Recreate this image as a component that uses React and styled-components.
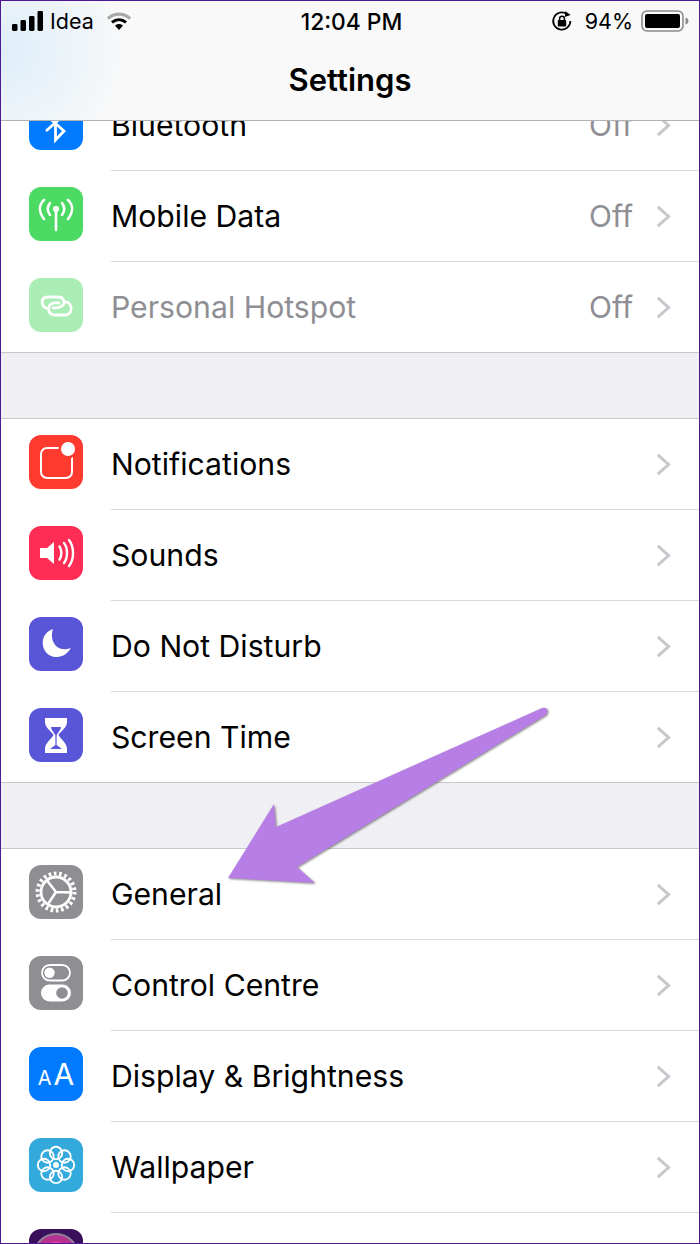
import styled, { createGlobalStyle } from 'styled-components';

const GlobalStyle = createGlobalStyle`
  html, body {
    margin: 0;
    padding: 0;
    background: #fff;
  }
  body {
    font-family: Inter, "Liberation Sans", sans-serif;
    -webkit-font-smoothing: antialiased;
  }
`;

const Frame = styled.div`
  position: relative;
  width: 700px;
  height: 1244px;
  box-sizing: border-box;
  border: 1px solid #4c1a92;
  overflow: hidden;
  display: flex;
  flex-direction: column;
  background: #efeff4;
`;

const NavBar = styled.header`
  position: relative;
  z-index: 1;
  flex: none;
  height: 120px;
  box-sizing: border-box;
  border-bottom: 1px solid #b2b2b2;
  background:
    radial-gradient(ellipse 130px 120px at 0 50px, #deeef9 0%, rgba(222, 238, 249, 0) 100%),
    #f9f9f9;
  display: flex;
  flex-direction: column;
`;

const StatusBar = styled.div`
  display: grid;
  grid-template-columns: 1fr auto 1fr;
  align-items: center;
  height: 40px;
  padding: 0 10px 0 11px;
  color: #000;
`;

const StatusSide = styled.div`
  display: flex;
  align-items: center;
  justify-content: ${(p) => (p.$end ? 'flex-end' : 'flex-start')};
`;

const Carrier = styled.span`
  font-size: 21.5px;
  margin: 0 12px 0 6px;
`;

const Clock = styled.span`
  font-size: 22.8px;
  font-weight: 500;
  margin-left: 2px;
`;

const Percent = styled.span`
  font-size: 21.5px;
  margin: 0 8px 0 12px;
`;

const Title = styled.h1`
  margin: 21px 0 0;
  text-align: center;
  font-size: 31px;
  font-weight: 600;
  line-height: 36px;
  color: #000;
`;

const List = styled.main`
  flex: 1;
  min-height: 0;
  overflow: hidden;
`;

const Group = styled.section`
  background: #fff;
  margin-bottom: 65px;
  border-top: ${(p) => (p.$flush ? 'none' : '1px solid #c8c7cc')};
  margin-top: ${(p) => (p.$flush ? '-41px' : '0')};
`;

const Row = styled.div`
  display: flex;
  align-items: flex-start;
  gap: 28px;
  height: 91px;
  box-sizing: border-box;
  padding-left: 28px;
  &:last-child {
    border-bottom: 1px solid #c8c7cc;
  }
`;

const Tile = styled.div`
  flex: none;
  width: 54px;
  height: 54px;
  margin-top: 16px;
  border-radius: 12px;
  background: ${(p) => p.$bg};
  opacity: ${(p) => (p.$dim ? 0.47 : 1)};
  display: flex;
  align-items: center;
  justify-content: center;
  overflow: hidden;
  color: #fff;
`;

const Body = styled.div`
  flex: 1;
  height: 100%;
  box-sizing: border-box;
  display: flex;
  align-items: center;
  padding-right: 28px;
  border-bottom: 1px solid #d9d9dc;
  ${Row}:last-child & {
    border-bottom: none;
  }
`;

const Label = styled.span`
  flex: 1;
  font-size: 30.2px;
  color: ${(p) => (p.$dim ? '#8e8e93' : '#000')};
`;

const Value = styled.span`
  font-size: 30px;
  color: #8e8e93;
  margin-right: 23px;
`;

const Letters = styled.span`
  font-weight: 400;
  line-height: 1;
  font-size: ${(p) => p.$size}px;
  & + & {
    margin-left: 2px;
  }
`;

const DisplayMark = styled.div`
  display: flex;
  align-items: baseline;
`;

const ArrowLayer = styled.svg`
  position: absolute;
  left: -1px;
  top: -1px;
  z-index: 2;
  pointer-events: none;
  overflow: visible;
  filter: drop-shadow(1px 1.5px 1px rgba(60, 60, 60, 0.6));
`;

const Chevron = () => (
  <svg width="15" height="23" viewBox="0 0 15 23" fill="none">
    <path d="M1.8 1.8 L12.6 11.5 L1.8 21.2" stroke="#c7c7cc" strokeWidth="3" />
  </svg>
);

const SignalBars = () => (
  <svg width="32" height="20" viewBox="0 0 32 20" fill="#000">
    <rect x="0" y="13" width="5.5" height="7" rx="1.4" />
    <rect x="8.5" y="9" width="5.5" height="11" rx="1.4" />
    <rect x="17" y="5" width="5.5" height="15" rx="1.4" />
    <rect x="25.5" y="0" width="5.5" height="20" rx="1.4" />
  </svg>
);

const Wifi = () => (
  <svg width="26" height="20" viewBox="0 0 28 20" fill="none">
    <path d="M2 7.5 C9 1 19 1 26 7.5" stroke="#a9a9a9" strokeWidth="3.4" />
    <path d="M6.4 11.5 C11 7.6 17 7.6 21.6 11.5" stroke="#000" strokeWidth="3.2" />
    <path d="M9.8 15 C12.4 12.8 15.6 12.8 18.2 15 L14 19.6 Z" fill="#000" />
  </svg>
);

const RotationLock = () => (
  <svg width="22" height="22" viewBox="0 0 22 22" fill="none">
    <path d="M19.4 11 A8.6 8.6 0 1 1 15.6 3.9" stroke="#000" strokeWidth="1.7" />
    <path d="M14.4 1.2 L19.6 5 L13.8 7 Z" fill="#000" />
    <rect x="6.8" y="10" width="8.4" height="6.4" rx="1" fill="#000" />
    <path d="M8.6 10 V8.6 A2.4 2.4 0 0 1 13.4 8.6 V10" stroke="#000" strokeWidth="1.5" />
  </svg>
);

const Battery = () => (
  <svg width="48" height="22" viewBox="0 0 48 22">
    <rect x="1" y="1" width="41" height="20" rx="5" fill="none" stroke="#8a8a8a" strokeWidth="1.6" />
    <rect x="4" y="4" width="35" height="14" rx="2" fill="#000" />
    <path d="M44.5 7.5 C46.5 8 47.4 9.4 47.4 11 C47.4 12.6 46.5 14 44.5 14.5 Z" fill="#8a8a8a" />
  </svg>
);

const BluetoothIcon = () => (
  <svg width="54" height="54" viewBox="0 0 54 54" fill="none" stroke="#fff" strokeWidth="2.8">
    <path d="M17 19 L35 35 L26.5 44 V10 L35 19 L17 35" />
  </svg>
);

const AntennaIcon = () => (
  <svg width="54" height="54" viewBox="0 0 54 54" fill="none" stroke="#fff" strokeWidth="2.6" strokeLinecap="round">
    <path d="M27 21 V43" />
    <circle cx="27" cy="22" r="3" fill="#fff" stroke="none" />
    <path d="M21 28 C18 24 18 20 21 16" />
    <path d="M33 28 C36 24 36 20 33 16" />
    <path d="M15 32 C9.6 25 9.6 18 15 13" />
    <path d="M39 32 C44.4 25 44.4 18 39 13" />
  </svg>
);

const LinkIcon = () => (
  <svg width="54" height="54" viewBox="0 0 54 54" fill="none" stroke="#fff" strokeWidth="2.8" strokeLinecap="round">
    <path d="M17 30 C12 28 11 19 19 19 H29 C35 19 37 25 33 28 C31 30 28 30 24 30" />
    <path d="M37 24 C43 24 45 37 36 37 H26 C20 37 17 30 22 26 C24 24.6 27 24.6 30 25" />
  </svg>
);

const NotificationIcon = () => (
  <svg width="54" height="54" viewBox="0 0 54 54" fill="none">
    <rect x="12" y="13" width="31" height="30" rx="6" stroke="#fff" strokeWidth="2" />
    <circle cx="39" cy="14" r="9.5" fill="#ff3b30" />
    <circle cx="39" cy="14" r="7" fill="#fff" />
  </svg>
);

const SpeakerIcon = () => (
  <svg width="54" height="54" viewBox="0 0 54 54" fill="none" stroke="#fff" strokeWidth="2.4" strokeLinecap="round">
    <path d="M11 22 H18 L25 16 V38 L18 32 H11 Z" fill="#fff" stroke="none" />
    <path d="M30.5 20.5 C33 24 33 30 30.5 33.5" />
    <path d="M35 17 C39 22 39 32 35 37" />
    <path d="M40 14 C45.4 21 45.4 33 40 40" />
  </svg>
);

const MoonIcon = () => (
  <svg width="54" height="54" viewBox="0 0 54 54">
    <path d="M24 12 C20 24 28 36 41.7 31 C38 38 32 40 27 40 C19 40 13.7 33 13.7 26 C13.7 19 18 14 24 12 Z" fill="#fff" />
  </svg>
);

const HourglassIcon = () => (
  <svg width="54" height="54" viewBox="0 0 54 54">
    <path d="M16 10 H38 V14 C38 20 31.5 23 29.5 27 C31.5 31 38 35 38 41 V45 H16 V41 C16 35 22.5 31 24.5 27 C22.5 23 16 20 16 14 Z" fill="#fff" />
    <path d="M22 19 H32 C32 22 29 24 27.8 27 H26.2 C25 24 22 22 22 19 Z" fill="#5856d6" />
    <path d="M26.4 27 H27.6 V37 L33 41 H21 L26.4 37 Z" fill="#5856d6" />
  </svg>
);

const GearIcon = () => (
  <svg width="54" height="54" viewBox="0 0 54 54" fill="none" stroke="#fff">
    <circle cx="27" cy="27" r="18.5" strokeWidth="4" strokeDasharray="2.64 2.64" />
    <circle cx="27" cy="27" r="15" strokeWidth="2.8" />
    <path d="M27 27 L18 15.5 M27 27 L41 27.5 M27 27 L19 39" strokeWidth="2.6" />
  </svg>
);

const TogglesIcon = () => (
  <svg width="54" height="54" viewBox="0 0 54 54">
    <rect x="13" y="9" width="28" height="15.5" rx="7.7" fill="none" stroke="#fff" strokeWidth="1.8" />
    <circle cx="20.5" cy="16.7" r="5.2" fill="#fff" />
    <rect x="12" y="28.5" width="30" height="17" rx="8.5" fill="#fff" />
    <circle cx="33" cy="37" r="5.8" fill="#8e8e93" />
  </svg>
);

const petals = [0, 45, 90, 135, 180, 225, 270, 315];

const FlowerIcon = () => (
  <svg width="54" height="54" viewBox="0 0 54 54" fill="none" stroke="#fff" strokeWidth="1.9">
    {petals.map((a) => (
      <circle key={a} cx="27" cy="15" r="6.2" transform={`rotate(${a} 27 27)`} />
    ))}
    <circle cx="27" cy="27" r="3" fill="#fff" stroke="none" />
  </svg>
);

const SiriIcon = () => (
  <svg width="54" height="54" viewBox="0 0 54 54">
    <circle cx="27" cy="27" r="22" fill="#b5318f" stroke="#8f7f9b" strokeWidth="2" />
    <circle cx="27" cy="27" r="15" fill="#d8389f" />
  </svg>
);

const DisplayIcon = () => (
  <DisplayMark>
    <Letters $size={20}>A</Letters>
    <Letters $size={30}>A</Letters>
  </DisplayMark>
);

const connectivity = [
  { label: 'Bluetooth', value: 'Off', bg: '#007aff', icon: <BluetoothIcon /> },
  { label: 'Mobile Data', value: 'Off', bg: '#4cd964', icon: <AntennaIcon /> },
  { label: 'Personal Hotspot', value: 'Off', bg: '#4cd964', icon: <LinkIcon />, dim: true },
];

const alerts = [
  { label: 'Notifications', bg: '#ff3b30', icon: <NotificationIcon /> },
  { label: 'Sounds', bg: '#ff2d55', icon: <SpeakerIcon /> },
  { label: 'Do Not Disturb', bg: '#5856d6', icon: <MoonIcon /> },
  { label: 'Screen Time', bg: '#5856d6', icon: <HourglassIcon /> },
];

const system = [
  { label: 'General', bg: '#8e8e93', icon: <GearIcon /> },
  { label: 'Control Centre', bg: '#8e8e93', icon: <TogglesIcon /> },
  { label: 'Display & Brightness', bg: '#007aff', icon: <DisplayIcon /> },
  { label: 'Wallpaper', bg: '#34aadc', icon: <FlowerIcon /> },
  { bg: '#3a0f5c', icon: <SiriIcon /> },
];

const SettingsRow = ({ item }) => (
  <Row>
    <Tile $bg={item.bg} $dim={item.dim}>{item.icon}</Tile>
    <Body>
      <Label $dim={item.dim}>{item.label}</Label>
      {item.value && <Value>{item.value}</Value>}
      <Chevron />
    </Body>
  </Row>
);

const App = () => {
  return (
    <Frame>
      <GlobalStyle />
      <NavBar>
        <StatusBar>
          <StatusSide>
            <SignalBars />
            <Carrier>Idea</Carrier>
            <Wifi />
          </StatusSide>
          <Clock>12:04 PM</Clock>
          <StatusSide $end>
            <RotationLock />
            <Percent>94%</Percent>
            <Battery />
          </StatusSide>
        </StatusBar>
        <Title>Settings</Title>
      </NavBar>
      <List>
        <Group $flush>
          {connectivity.map((item) => <SettingsRow key={item.label} item={item} />)}
        </Group>
        <Group>
          {alerts.map((item) => <SettingsRow key={item.label} item={item} />)}
        </Group>
        <Group>
          {system.map((item) => <SettingsRow key={item.bg + item.label} item={item} />)}
        </Group>
      </List>
      <ArrowLayer width="700" height="1244" viewBox="0 0 700 1244">
        <path
          d="M228 878 L274 804 L276 827 L542 708 Q547 707 547.5 711 Q547.5 714 545 715.5 L297 867 L315 883 Z"
          fill="#b77fe6"
        />
      </ArrowLayer>
    </Frame>
  );
};

export default App;
